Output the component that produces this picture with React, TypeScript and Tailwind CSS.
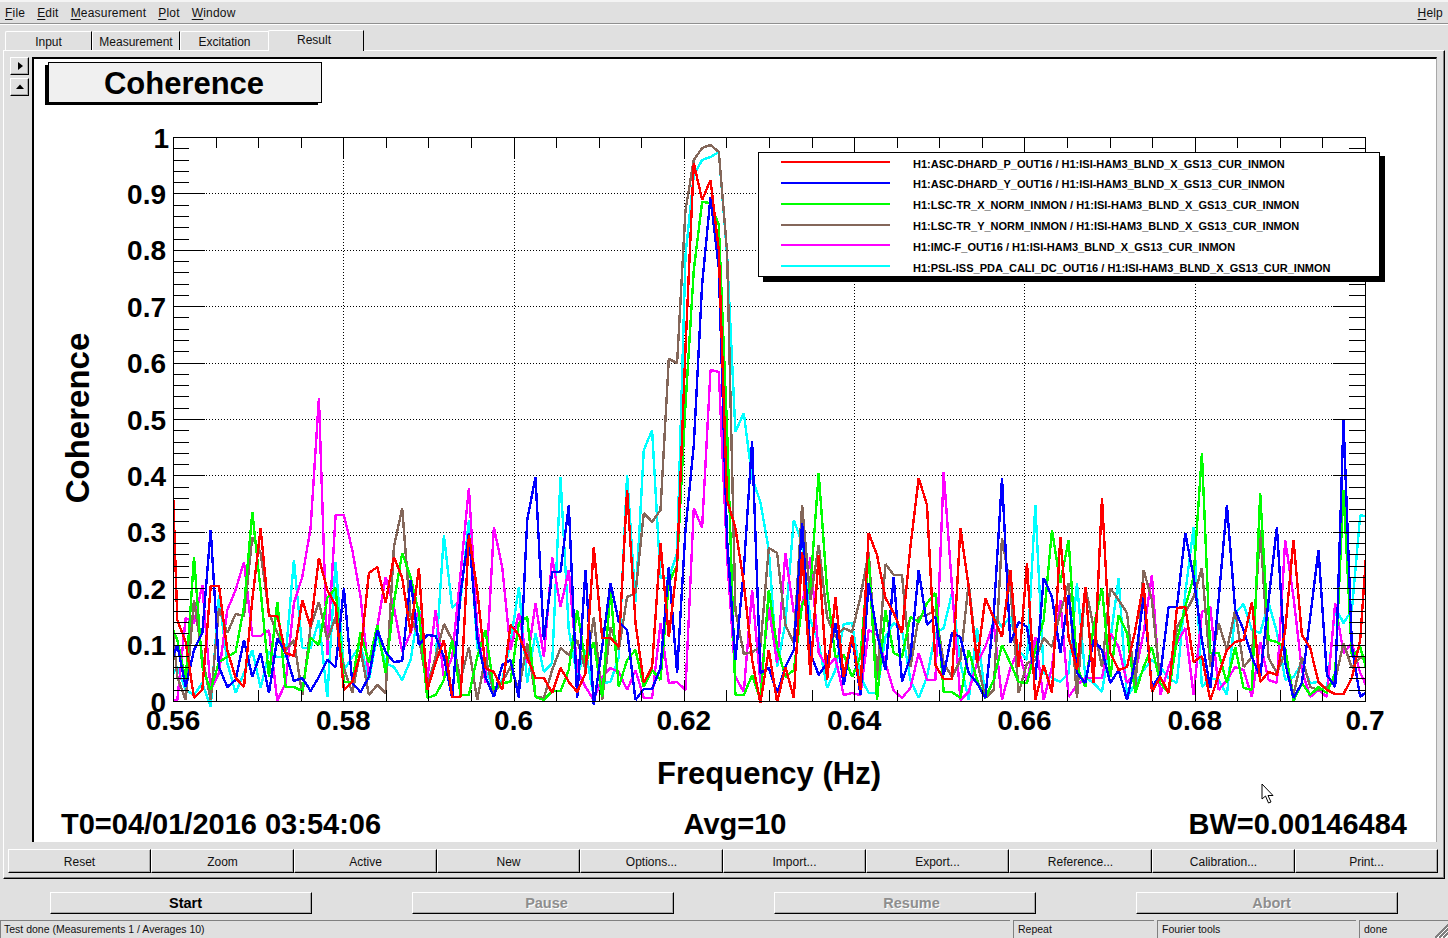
import React from 'react';

// trace samples: y pixel of each frequency bin, bin i sits at x = 169 + 8.33 * i
const red = [
  370, 620, 642, 698, 690, 586, 586, 650, 678, 687, 600, 528, 616, 616, 653, 656, 600, 627, 558, 590, 605, 690, 682, 653, 573, 567, 603, 557, 578, 633, 568, 690, 663, 640, 697, 697,
  535, 590, 668, 672, 690, 625, 635, 657, 678, 678, 693, 668, 682, 692, 673, 547, 638, 638, 647, 490, 623, 683, 667, 543, 637, 565, 348, 163, 200, 180, 250, 500, 528, 583, 660, 703,
  650, 702, 667, 698, 552, 675, 555, 680, 597, 677, 635, 690, 533, 555, 598, 613, 633, 547, 478, 505, 665, 679, 679, 528, 587, 663, 598, 618, 637, 570, 667, 563, 700, 665, 693, 537,
  637, 670, 587, 683, 498, 653, 670, 667, 630, 583, 692, 677, 693, 608, 607, 662, 656, 700, 675, 650, 642, 640, 602, 682, 672, 675, 630, 540, 635, 648, 682, 690, 694, 694, 678, 640, 520,
];
const blue = [
  667, 645, 687, 650, 633, 530, 667, 687, 680, 640, 677, 653, 693, 638, 653, 681, 678, 691, 677, 660, 667, 588, 683, 692, 677, 630, 652, 662, 661, 580, 645, 635, 636, 657, 698, 593,
  533, 637, 677, 697, 665, 660, 698, 520, 477, 640, 572, 572, 505, 698, 570, 705, 647, 583, 622, 630, 700, 689, 689, 668, 567, 673, 530, 445, 285, 197, 268, 540, 660, 570, 441, 673,
  668, 693, 667, 650, 523, 653, 675, 663, 623, 685, 637, 695, 583, 633, 670, 577, 682, 657, 570, 625, 617, 675, 633, 637, 673, 683, 698, 615, 478, 643, 622, 627, 680, 578, 597, 653,
  595, 673, 683, 640, 650, 683, 670, 700, 660, 597, 687, 675, 607, 607, 533, 577, 640, 688, 600, 505, 610, 630, 657, 677, 600, 527, 663, 698, 683, 617, 550, 675, 687, 420, 647, 697, 690,
];
const green = [
  620, 640, 680, 557, 667, 690, 662, 657, 652, 607, 512, 590, 677, 602, 687, 687, 691, 638, 645, 598, 588, 682, 682, 632, 663, 625, 673, 602, 553, 577, 613, 698, 695, 680, 640, 695,
  695, 657, 630, 690, 683, 682, 623, 617, 697, 700, 691, 691, 670, 610, 663, 642, 697, 590, 687, 660, 650, 687, 670, 680, 583, 565, 405, 270, 202, 203, 225, 430, 695, 695, 675, 700,
  590, 647, 677, 670, 605, 587, 473, 590, 657, 655, 677, 657, 557, 700, 610, 653, 657, 617, 622, 603, 593, 692, 692, 698, 650, 680, 698, 680, 645, 663, 682, 683, 650, 620, 530, 583,
  540, 667, 687, 627, 588, 677, 615, 633, 693, 667, 647, 683, 693, 640, 607, 577, 453, 653, 653, 683, 647, 688, 690, 493, 640, 642, 648, 701, 683, 695, 687, 693, 673, 490, 657, 647, 677,
];
const brown = [
  590, 677, 700, 600, 657, 700, 608, 633, 614, 616, 537, 553, 613, 633, 650, 640, 695, 627, 602, 640, 617, 668, 693, 650, 695, 685, 693, 547, 508, 617, 637, 687, 657, 624, 640, 680,
  647, 700, 657, 693, 682, 667, 690, 643, 697, 698, 670, 648, 655, 640, 670, 617, 700, 627, 650, 597, 593, 513, 522, 510, 359, 363, 210, 160, 148, 145, 152, 252, 610, 654, 652, 647,
  548, 553, 625, 643, 505, 600, 545, 617, 637, 628, 632, 597, 552, 680, 564, 575, 575, 667, 617, 615, 610, 663, 677, 660, 583, 660, 698, 690, 538, 587, 693, 663, 660, 638, 647, 613,
  583, 698, 587, 627, 667, 588, 600, 613, 687, 570, 600, 683, 693, 627, 613, 597, 568, 667, 623, 650, 610, 667, 657, 530, 658, 673, 653, 695, 657, 687, 690, 687, 680, 643, 668, 657, 660,
];
const magenta = [
  700, 700, 618, 623, 585, 690, 673, 610, 590, 562, 636, 636, 630, 701, 683, 603, 577, 528, 398, 655, 515, 515, 550, 597, 677, 627, 577, 607, 652, 633, 610, 680, 610, 677, 657, 573,
  488, 627, 683, 527, 567, 650, 613, 663, 603, 657, 557, 607, 570, 670, 687, 700, 677, 668, 672, 690, 670, 698, 698, 623, 683, 682, 690, 508, 528, 370, 372, 557, 677, 692, 590, 683,
  607, 663, 553, 613, 605, 557, 653, 667, 658, 695, 693, 695, 630, 635, 663, 691, 698, 688, 653, 680, 680, 472, 587, 700, 692, 663, 647, 623, 700, 668, 650, 682, 637, 700, 667, 600,
  697, 685, 678, 678, 678, 633, 647, 683, 673, 633, 575, 695, 667, 643, 628, 695, 612, 607, 690, 680, 667, 670, 697, 642, 680, 683, 540, 597, 670, 697, 690, 697, 603, 653, 643, 673, 690,
];
const cyan = [
  680, 667, 690, 695, 683, 707, 595, 663, 693, 673, 650, 688, 652, 657, 657, 560, 648, 648, 620, 697, 562, 670, 657, 645, 680, 635, 663, 667, 680, 660, 607, 683, 660, 535, 608, 600,
  520, 647, 670, 690, 680, 643, 587, 683, 633, 672, 663, 477, 630, 677, 650, 697, 683, 682, 657, 475, 602, 450, 430, 578, 578, 553, 255, 175, 160, 157, 152, 255, 432, 413, 478, 502,
  550, 667, 623, 520, 543, 620, 643, 688, 670, 624, 623, 677, 693, 693, 637, 623, 630, 680, 698, 677, 633, 628, 593, 663, 700, 628, 697, 615, 627, 617, 650, 660, 505, 673, 678, 682,
  673, 583, 677, 683, 692, 640, 578, 698, 683, 670, 660, 667, 678, 683, 593, 527, 687, 678, 680, 695, 613, 604, 630, 633, 603, 632, 680, 677, 663, 683, 682, 690, 607, 623, 610, 515, 517,
];

// legend order; drawn backwards so red ends up on top
const traces = [
  { color: '#ff0000', data: red, label: 'H1:ASC-DHARD_P_OUT16 / H1:ISI-HAM3_BLND_X_GS13_CUR_INMON', y: 164, lineY: 163 },
  { color: '#0000ff', data: blue, label: 'H1:ASC-DHARD_Y_OUT16 / H1:ISI-HAM3_BLND_X_GS13_CUR_INMON', y: 184, lineY: 184 },
  { color: '#00ff00', data: green, label: 'H1:LSC-TR_X_NORM_INMON / H1:ISI-HAM3_BLND_X_GS13_CUR_INMON', y: 205, lineY: 205 },
  { color: '#84675a', data: brown, label: 'H1:LSC-TR_Y_NORM_INMON / H1:ISI-HAM3_BLND_X_GS13_CUR_INMON', y: 226, lineY: 226 },
  { color: '#ff00ff', data: magenta, label: 'H1:IMC-F_OUT16 / H1:ISI-HAM3_BLND_X_GS13_CUR_INMON', y: 247, lineY: 246 },
  { color: '#00ffff', data: cyan, label: 'H1:PSL-ISS_PDA_CALI_DC_OUT16 / H1:ISI-HAM3_BLND_X_GS13_CUR_INMON', y: 268, lineY: 267 },
];

const toPoints = (data: number[]) => data.map((y, i) => `${(169 + 8.33 * i).toFixed(1)},${y}`).join(' ');

const PLOT = { left: 173, right: 1365, top: 137, bottom: 701 };
const xOf = (f: number) => PLOT.left + ((f - 0.56) / 0.14) * (PLOT.right - PLOT.left);
const yOf = (c: number) => PLOT.bottom - c * (PLOT.bottom - PLOT.top);

const xLabels = ['0.56', '0.58', '0.6', '0.62', '0.64', '0.66', '0.68', '0.7'];
const yLabels = ['0', '0.1', '0.2', '0.3', '0.4', '0.5', '0.6', '0.7', '0.8', '0.9', '1'];

const Plot: React.FC = () => {
  const xMinor = Array.from({ length: 29 }, (_, i) => i);
  const yMinor = Array.from({ length: 51 }, (_, i) => i);

  return (
    <svg viewBox="34 59 1402 783" width="1402" height="783" className="block">
      {/* dotted grid */}
      <g stroke="#000" strokeWidth="1" strokeDasharray="1 2" shapeRendering="crispEdges">
        {[1, 2, 3, 4, 5, 6].map(k => (
          <line key={k} x1={Math.round(xOf(0.56 + k * 0.02)) + 0.5} x2={Math.round(xOf(0.56 + k * 0.02)) + 0.5} y1={PLOT.top} y2={PLOT.bottom} />
        ))}
        {[1, 2, 3, 4, 5, 6, 7, 8, 9].map(k => (
          <line key={k} x1={PLOT.left} x2={PLOT.right} y1={Math.round(yOf(k / 10)) + 0.5} y2={Math.round(yOf(k / 10)) + 0.5} />
        ))}
      </g>

      <clipPath id="plot-area">
        <rect x={PLOT.left} y={PLOT.top} width={PLOT.right - PLOT.left} height={PLOT.bottom - PLOT.top + 8} />
      </clipPath>
      <g clipPath="url(#plot-area)" fill="none" strokeWidth="2.4" strokeLinejoin="bevel" shapeRendering="crispEdges">
        {[...traces].reverse().map(t => (
          <polyline key={t.color} points={toPoints(t.data)} stroke={t.color} />
        ))}
      </g>

      {/* frame and ticks */}
      <g stroke="#000" strokeWidth="1" fill="none" shapeRendering="crispEdges">
        <rect x={PLOT.left + 0.5} y={PLOT.top + 0.5} width={PLOT.right - PLOT.left} height={PLOT.bottom - PLOT.top} />
        {xMinor.map(i => {
          const x = Math.round(xOf(0.56 + i * 0.005)) + 0.5;
          const len = i % 4 === 0 ? 21 : 11;
          return (
            <g key={i}>
              <line x1={x} x2={x} y1={PLOT.bottom} y2={PLOT.bottom - len} />
              <line x1={x} x2={x} y1={PLOT.top} y2={PLOT.top + len} />
            </g>
          );
        })}
        {yMinor.map(i => {
          const y = Math.round(yOf(i * 0.02)) + 0.5;
          const len = i % 5 === 0 ? 32 : 16;
          return (
            <g key={i}>
              <line x1={PLOT.left} x2={PLOT.left + len} y1={y} y2={y} />
              <line x1={PLOT.right} x2={PLOT.right - len} y1={y} y2={y} />
            </g>
          );
        })}
      </g>

      {/* axis labels */}
      <g className="font-bold text-[28px]" fill="#000">
        {xLabels.map((l, i) => (
          <text key={l} x={xOf(0.56 + i * 0.02)} y={730} textAnchor="middle">{l}</text>
        ))}
        {yLabels.map((l, i) => (
          <text key={l} x={l === '1' ? 169 : 166} y={yOf(i / 10) + 10.5} textAnchor="end">{l}</text>
        ))}
      </g>
      <text x={769} y={784} textAnchor="middle" className="font-bold text-[31px]">Frequency (Hz)</text>
      <text transform="translate(89 418) rotate(-90)" textAnchor="middle" className="font-bold text-[33px]">Coherence</text>

      {/* title pave */}
      <rect x="45" y="65" width="273" height="40" fill="#000" />
      <rect x="48.5" y="62.5" width="273" height="40" fill="#f0f0f0" stroke="#000" shapeRendering="crispEdges" />
      <text x={184} y={94} textAnchor="middle" className="font-bold text-[31px]">Coherence</text>

      {/* legend */}
      <rect x="763" y="156" width="622" height="126" fill="#000" />
      <rect x="758.5" y="152.5" width="621" height="124" fill="#fff" stroke="#000" shapeRendering="crispEdges" />
      {traces.map(t => (
        <g key={t.label}>
          <line x1="781" x2="890" y1={t.lineY - 1} y2={t.lineY - 1} stroke={t.color} strokeWidth="2" shapeRendering="crispEdges" />
          <text x={913} y={t.y + 4} className="font-bold text-[11px]">{t.label}</text>
        </g>
      ))}

      {/* stats line */}
      <g className="font-bold text-[29px]">
        <text x={61} y={834}>T0=04/01/2016 03:54:06</text>
        <text x={735} y={834} textAnchor="middle">Avg=10</text>
        <text x={1407} y={834} textAnchor="end">BW=0.00146484</text>
      </g>

      {/* mouse pointer */}
      <path d="M1262 784 L1262 799 L1265.5 796 L1268.5 803 L1271 802 L1268 795.5 L1273 795.5 Z" fill="#fff" stroke="#000" strokeWidth="1" />
    </svg>
  );
};

const Underlined: React.FC<{ text: string }> = ({ text }) => (
  <span>
    <span className="underline underline-offset-2">{text[0]}</span>
    {text.slice(1)}
  </span>
);

const raised = 'border border-t-white border-l-white border-r-black border-b-black shadow-[inset_-1px_-1px_0_#a8a8a8]';

const Tab: React.FC<{ label: string; width: string; active?: boolean; edge?: boolean }> = ({ label, width, active, edge = true }) => (
  <div
    className={`${width} flex items-center justify-center border-t border-l border-white rounded-tl-[2px] ${edge ? 'border-r border-r-black' : ''} ${
      active ? 'h-[21px] pb-[2px] pr-[4px] relative top-[1px] z-10 bg-[#e0e0e0]' : 'h-[19px] pt-[1px]'
    }`}
  >
    {label}
  </div>
);

const toolButtons = ['Reset', 'Zoom', 'Active', 'New', 'Options...', 'Import...', 'Export...', 'Reference...', 'Calibration...', 'Print...'];

const Triangle: React.FC<{ points: string }> = ({ points }) => (
  <svg viewBox="0 0 8 8" width="8" height="8">
    <polygon points={points} fill="#000" />
  </svg>
);

export default function App() {
  return (
    <div className="relative w-[1448px] h-[938px] overflow-hidden bg-[#e0e0e0] flex flex-col text-[12px] text-[#111] font-['Liberation_Sans',Arial,sans-serif]">
      {/* menu bar */}
      <div className="h-[25px] flex-none border-t-2 border-t-[#f4f4f4] border-b border-b-white shadow-[inset_0_-1px_0_#909090] flex items-center justify-between px-[5px] tracking-[0.2px]">
        <div className="flex gap-[12px]">
          {['File', 'Edit', 'Measurement', 'Plot', 'Window'].map(m => (
            <Underlined key={m} text={m} />
          ))}
        </div>
        <Underlined text="Help" />
      </div>

      {/* tabs */}
      <div className="h-[25px] flex-none flex items-end pl-[5px]">
        <Tab label="Input" width="w-[87px]" />
        <Tab label="Measurement" width="w-[88px]" />
        <Tab label="Excitation" width="w-[88px]" edge={false} />
        <Tab label="Result" width="w-[96px]" active />
      </div>

      {/* tab body */}
      <div className="h-[829px] flex-none ml-[3px] mr-[3px] border-t border-l border-t-white border-l-white border-r border-b border-r-black border-b-black shadow-[inset_-1px_-1px_0_#808080] flex flex-col pl-[4px] pt-[6px]">
        <div className="flex h-[785px]">
          <div className="w-[24px] flex-none pl-[2px] flex flex-col gap-[3px]">
            <button className={`w-[19px] h-[18px] flex items-center justify-center ${raised}`}>
              <Triangle points="2,0 7,4 2,8" />
            </button>
            <button className={`w-[19px] h-[18px] flex items-center justify-center ${raised}`}>
              <Triangle points="0,6 4,1.5 8,6" />
            </button>
          </div>
          <div className="w-[1405px] h-[785px] bg-white border-t-2 border-l-2 border-t-black border-l-black border-r border-r-[#a8a8a8]">
            <Plot />
          </div>
        </div>
        <div className="flex mt-[7px]">
          {toolButtons.map(b => (
            <button key={b} className={`w-[143px] h-[24px] flex-none text-center text-[12px] pt-[1px] ${raised}`}>
              {b}
            </button>
          ))}
        </div>
      </div>

      {/* run controls */}
      <div className="h-[41px] flex-none flex items-center pl-[50px] gap-[100px] pt-[6px] text-[14.5px] font-bold">
        <button className={`w-[262px] h-[22px] pl-[9px] pb-[2px] text-black ${raised}`}>Start</button>
        <button className={`w-[262px] h-[22px] pl-[7px] pb-[2px] text-[#8e8e8e] [text-shadow:1px_1px_0_#fff] ${raised}`}>Pause</button>
        <button className={`w-[262px] h-[22px] pl-[13px] pb-[2px] text-[#8e8e8e] [text-shadow:1px_1px_0_#fff] ${raised}`}>Resume</button>
        <button className={`w-[262px] h-[22px] pl-[9px] pb-[2px] text-[#8e8e8e] [text-shadow:1px_1px_0_#fff] ${raised}`}>Abort</button>
      </div>

      {/* status bar */}
      <div className="h-[18px] flex-none flex text-[10.5px] leading-[17px]">
        <div className="w-[1010px] border-t border-l border-[#808080] pl-[3px]">Test done (Measurements 1 / Averages 10)</div>
        <div className="w-[141px] ml-[3px] border-t border-l border-[#808080] pl-[4px]">Repeat</div>
        <div className="w-[199px] ml-[3px] border-t border-l border-[#808080] pl-[4px]">Fourier tools</div>
        <div className="flex-1 ml-[3px] border-t border-l border-[#808080] pl-[4px]">done</div>
      </div>

      {/* size grip */}
      <svg viewBox="0 0 14 14" width="14" height="14" className="absolute right-0 bottom-0" shapeRendering="crispEdges">
        {[1, 5, 9].map(o => (
          <g key={o}>
            <line x1={o} y1="14" x2="14" y2={o} stroke="#808080" strokeWidth="2.2" />
            <line x1={o + 2.5} y1="14" x2="14" y2={o + 2.5} stroke="#fff" strokeWidth="1" />
          </g>
        ))}
      </svg>
    </div>
  );
}
